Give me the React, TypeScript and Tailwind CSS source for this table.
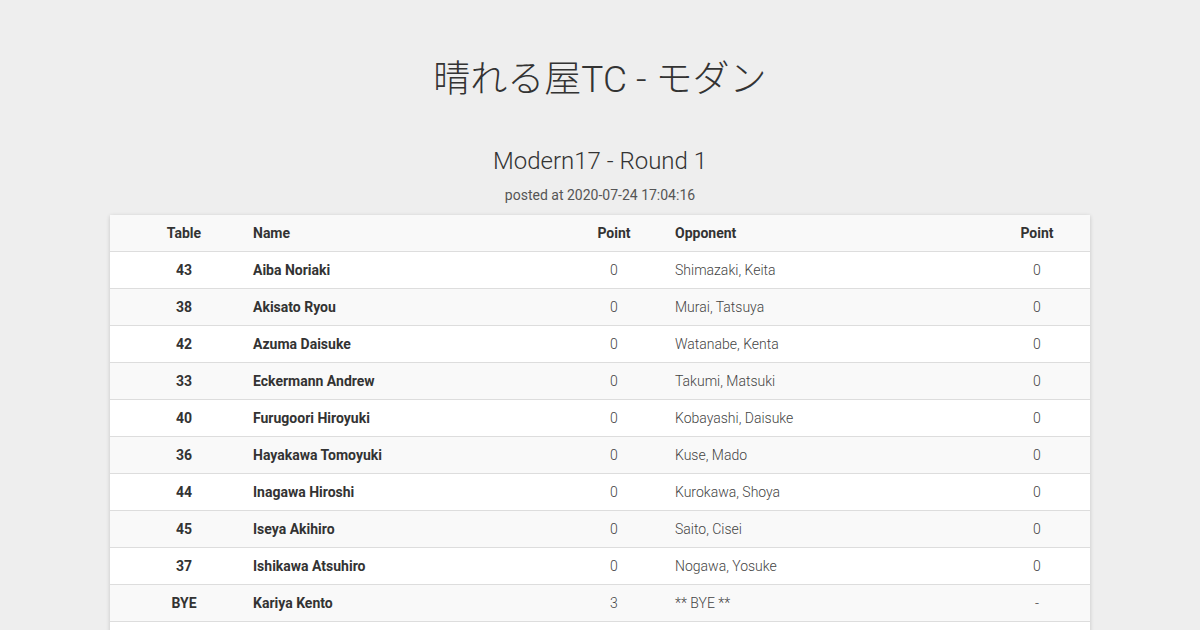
import React from 'react';

type Pairing = {
  table: string;
  name: string;
  point: string;
  opponent: string;
  oppPoint: string;
};

const pairings: Pairing[] = [
  { table: '43', name: 'Aiba Noriaki', point: '0', opponent: 'Shimazaki, Keita', oppPoint: '0' },
  { table: '38', name: 'Akisato Ryou', point: '0', opponent: 'Murai, Tatsuya', oppPoint: '0' },
  { table: '42', name: 'Azuma Daisuke', point: '0', opponent: 'Watanabe, Kenta', oppPoint: '0' },
  { table: '33', name: 'Eckermann Andrew', point: '0', opponent: 'Takumi, Matsuki', oppPoint: '0' },
  { table: '40', name: 'Furugoori Hiroyuki', point: '0', opponent: 'Kobayashi, Daisuke', oppPoint: '0' },
  { table: '36', name: 'Hayakawa Tomoyuki', point: '0', opponent: 'Kuse, Mado', oppPoint: '0' },
  { table: '44', name: 'Inagawa Hiroshi', point: '0', opponent: 'Kurokawa, Shoya', oppPoint: '0' },
  { table: '45', name: 'Iseya Akihiro', point: '0', opponent: 'Saito, Cisei', oppPoint: '0' },
  { table: '37', name: 'Ishikawa Atsuhiro', point: '0', opponent: 'Nogawa, Yosuke', oppPoint: '0' },
  { table: 'BYE', name: 'Kariya Kento', point: '3', opponent: '** BYE **', oppPoint: '-' },
  { table: '41', name: 'Kato Yuya', point: '0', opponent: 'Matsumoto, Ryo', oppPoint: '0' },
];

const cols = 'grid grid-cols-[143px_308px_106px_317px_106px]';

const App: React.FC = () => {
  return (
    <div className="min-h-[630px] bg-[#eeeeee] font-['Roboto','Noto_Sans_CJK_JP',sans-serif] text-[#333333]">
      <div className="flex flex-col items-center pt-[60px]">
        <h1 className="text-[37px] leading-[40px] font-light">晴れる屋TC - モダン</h1>
        <h2 className="mt-[46px] text-[24px] leading-[30px] font-light">Modern17 - Round 1</h2>
        <p className="mt-[9px] text-[14px] leading-[20px] text-[#555555]">posted at 2020-07-24 17:04:16</p>

        <div className="mt-[10px] w-[980px] bg-white shadow-[0_1px_4px_rgba(0,0,0,0.18)] text-[14px]">
          <div className={`${cols} h-[37px] items-center border-b border-[#dddddd] bg-[#f9f9f9] font-bold`}>
            <div className="pl-[5px] text-center">Table</div>
            <div>Name</div>
            <div className="text-center">Point</div>
            <div className="pl-2">Opponent</div>
            <div className="text-center">Point</div>
          </div>
          {pairings.map((p, i) => (
            <div
              key={p.name}
              className={`${cols} h-[37px] items-center border-b border-[#dddddd] ${i % 2 === 0 ? 'bg-white' : 'bg-[#f9f9f9]'}`}
            >
              <div className="pl-[5px] text-center font-bold">{p.table}</div>
              <div className="font-bold">{p.name}</div>
              <div className="text-center font-light text-[#444444]">{p.point}</div>
              <div className="pl-2 font-light text-[#444444]">{p.opponent}</div>
              <div className="text-center font-light text-[#444444]">{p.oppPoint}</div>
            </div>
          ))}
        </div>
      </div>
    </div>
  );
};

export default App;
